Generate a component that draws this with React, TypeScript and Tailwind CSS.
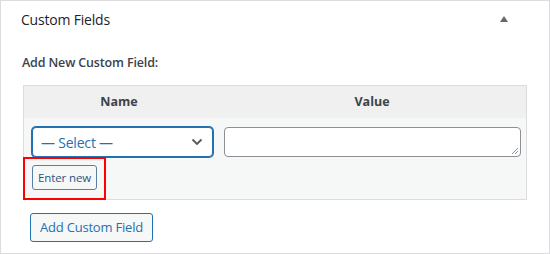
const App = () => {
  return (
    <div
      className="w-[550px] h-[254px] bg-white border border-[#dcdcde] text-[#3c434a]"
      style={{ fontFamily: '"Open Sans", "Noto Sans", sans-serif' }}
    >
      <div className="flex justify-between items-center h-[36px] pl-[20px] pr-[41px]">
        <h2 className="text-[14px] tracking-[-0.2px] text-[#1d2327]">Custom Fields</h2>
        <span className="w-0 h-0 border-l-[4px] border-r-[4px] border-b-[6px] border-l-transparent border-r-transparent border-b-[#646970]" />
      </div>

      <p className="mt-[17px] ml-[21px] text-[12.5px] tracking-[-0.15px] font-semibold leading-[18px]">
        Add New Custom Field:
      </p>

      <div className="mt-[13px] ml-[22px] w-[504px] border border-[#dcdcde]">
        <div className="grid grid-cols-[194px_1fr] h-[32px] bg-[#f0f0f1] items-center text-[12.5px] font-bold text-[#3c434a]">
          <div className="text-center pr-[4px]">Name</div>
          <div className="text-center">Value</div>
        </div>
        <div className="grid grid-cols-[194px_1fr] bg-[#f6f7f7] h-[81px] pt-[9px]">
          <div className="relative pl-[8px] pr-[5px]">
            <div className="flex items-center justify-between h-[30px] w-[181px] pl-[8px] pr-[9px] bg-white border border-[#2271b1] rounded-[4px] shadow-[0_0_0_1px_#2271b1] text-[14px] tracking-[-0.2px] text-[#2271b1]">
              <span>— Select —</span>
              <svg width="12" height="8" viewBox="0 0 12 8" fill="none">
                <path d="M1.5 1.5L6 6L10.5 1.5" stroke="#50575e" strokeWidth="1.8" />
              </svg>
            </div>
            <button className="mt-[8px] h-[25px] w-[65px] bg-[#f6f7f7] border border-[#5b7fa3] rounded-[3px] text-[11.5px] tracking-[-0.1px] text-[#2c5580]">
              Enter new
            </button>
            <div className="absolute left-[-1px] top-[30px] w-[83px] h-[43px] border-2 border-[#f00]" />
          </div>
          <div className="pl-[6px] pr-[5px]">
            <div className="relative h-[30px] bg-white border border-[#8c8f94] rounded-[4px]">
              <svg className="absolute right-[1px] bottom-[1px]" width="8" height="8" viewBox="0 0 8 8">
                <path d="M7 1L1 7M7 4L4 7" stroke="#8c8f94" strokeWidth="1" />
              </svg>
            </div>
          </div>
        </div>
      </div>

      <button className="mt-[13px] ml-[29px] h-[29px] w-[123px] bg-[#f6f7f7] border border-[#2271b1] rounded-[3px] text-[13px] tracking-[-0.2px] text-[#2271b1]">
        Add Custom Field
      </button>
    </div>
  );
};

export default App;
